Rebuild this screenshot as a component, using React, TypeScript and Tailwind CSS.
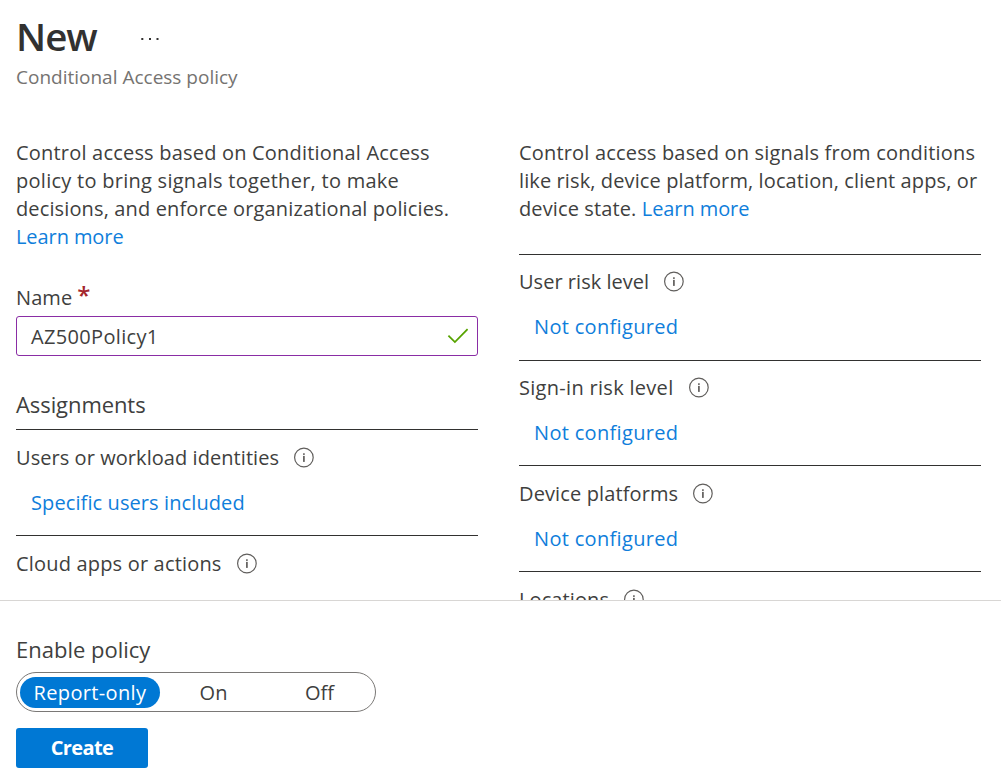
import type { ReactNode } from "react";

function InfoIcon() {
  return (
    <svg className="mb-0.5 ml-[15px] shrink-0" width="20" height="21" viewBox="0 0 20 21" fill="none" aria-hidden="true">
      <circle cx="9.9" cy="10.5" r="9.3" stroke="#605e5c" strokeWidth="1.2" />
      <rect x="9.05" y="6.3" width="1.7" height="1.6" fill="#605e5c" />
      <rect x="9.05" y="8.9" width="1.7" height="6" fill="#605e5c" />
    </svg>
  );
}

function Link({ className = "", children }: { className?: string; children: ReactNode }) {
  return (
    <a href="#" className={`text-[#0f7edb] ${className}`}>
      {children}
    </a>
  );
}

type SettingProps = {
  label: string;
  labelClass: string;
  rowClass: string;
  value?: string;
  valueClass?: string;
};

function Setting({ label, labelClass, rowClass, value, valueClass = "" }: SettingProps) {
  return (
    <div className={`border-t border-[#323130] ${rowClass}`}>
      <div className="flex h-7 items-center">
        <span className={labelClass}>{label}</span>
        <InfoIcon />
      </div>
      {value && <Link className={`mt-[17px] ml-[15px] block ${valueClass}`}>{value}</Link>}
    </div>
  );
}

export default function App() {
  return (
    <div className="flex h-[777px] w-[1001px] flex-col overflow-hidden bg-white font-['Open_Sans','Noto_Sans',sans-serif] text-[20px] leading-7 whitespace-nowrap text-[#403f3e]">
      <main className="h-[600px] shrink-0 overflow-hidden px-4">
        <header className="h-[139px] pt-[9px]">
          <div className="flex h-14 items-center">
            <h1 className="w-[125px] pb-[2px] text-[38.5px] leading-[54px] font-semibold tracking-[-1px] text-[#323130]">New</h1>
            <svg width="20" height="4" viewBox="0 0 20 4" fill="#323130" aria-hidden="true" className="mt-[3px]">
              <rect x="0.3" y="1" width="2" height="2" />
              <rect x="8" y="1" width="2" height="2" />
              <rect x="15.5" y="1" width="2" height="2" />
            </svg>
          </div>
          <p className="-mt-[2px] text-[19px] leading-7 text-[#757371]">Conditional Access policy</p>
        </header>

        <div className="flex gap-[41px]">
          <section className="w-[462px] shrink-0">
            <p>
              <span className="block tracking-[0.2px]">Control access based on Conditional Access</span>
              <span className="block tracking-[0.27px]">policy to bring signals together, to make</span>
              <span className="block tracking-[0.13px]">decisions, and enforce organizational policies.</span>
              <Link className="block tracking-[-0.08px]">Learn more</Link>
            </p>

            <label className="mt-[33px] flex h-7 tracking-[0.1px]">
              Name
              <span className="-mt-[3px] ml-[5px] text-[24px] font-semibold text-[#a4262c]">*</span>
            </label>
            <div className="mt-1 flex h-10 items-center justify-between rounded-[3px] border border-[#8a2da5] pr-[9px] pl-[14px]">
              <span className="pt-[2px] tracking-[0.33px]">AZ500Policy1</span>
              <svg width="21" height="16" viewBox="0 0 21 16" fill="none" stroke="#57a300" strokeWidth="1.8" aria-hidden="true">
                <path d="M1.4 7.7 L7.9 14.1 L20.6 1.2" />
              </svg>
            </div>

            <h2 className="mt-[34px] mb-[11px] text-[22px] leading-7 tracking-[-0.08px]">Assignments</h2>
            <Setting
              label="Users or workload identities"
              labelClass="tracking-[0.06px]"
              rowClass="h-[106px] pt-[14px]"
              value="Specific users included"
              valueClass="tracking-[0.1px]"
            />
            <Setting label="Cloud apps or actions" labelClass="tracking-[0.18px]" rowClass="h-[106px] pt-[14px]" />
          </section>

          <section className="w-[462px] shrink-0">
            <p className="mb-[31px]">
              <span className="block tracking-[0.18px]">Control access based on signals from conditions</span>
              <span className="block tracking-[0.11px]">like risk, device platform, location, client apps, or</span>
              <span className="block tracking-[0.12px]">
                device state. <Link className="tracking-[-0.08px]">Learn more</Link>
              </span>
            </p>
            <Setting
              label="User risk level"
              labelClass="tracking-[0.03px]"
              rowClass="h-[106px] pt-[13px]"
              value="Not configured"
              valueClass="tracking-[0.32px]"
            />
            <Setting
              label="Sign-in risk level"
              labelClass="tracking-[0.3px]"
              rowClass="h-[105px] pt-[13px]"
              value="Not configured"
              valueClass="tracking-[0.32px]"
            />
            <Setting
              label="Device platforms"
              labelClass="tracking-[0.12px]"
              rowClass="h-[106px] pt-[14px]"
              value="Not configured"
              valueClass="tracking-[0.32px]"
            />
            <Setting label="Locations" labelClass="tracking-[0.1px]" rowClass="h-[106px] pt-[14px]" />
          </section>
        </div>
      </main>

      <footer className="flex-1 border-t border-[#d8d6d4] px-4 pt-[34px]">
        <div className="h-[37px] text-[22px] leading-7">Enable policy</div>
        <div className="flex h-10 w-[360px] items-center rounded-full border border-[#7a7876] pl-[3px]">
          <button className="flex h-[31px] w-[140px] items-center justify-center rounded-full bg-[#0078d4] pt-px leading-7 tracking-[0.35px] text-white">
            Report-only
          </button>
          <button className="w-[107px] pt-[2px] leading-7">On</button>
          <button className="w-[105px] pt-[2px] leading-7">Off</button>
        </div>
        <button className="mt-4 flex h-10 w-[132px] items-center justify-center rounded-[3px] bg-[#0078d4] font-bold tracking-[-0.6px] text-white">
          Create
        </button>
      </footer>
    </div>
  );
}
